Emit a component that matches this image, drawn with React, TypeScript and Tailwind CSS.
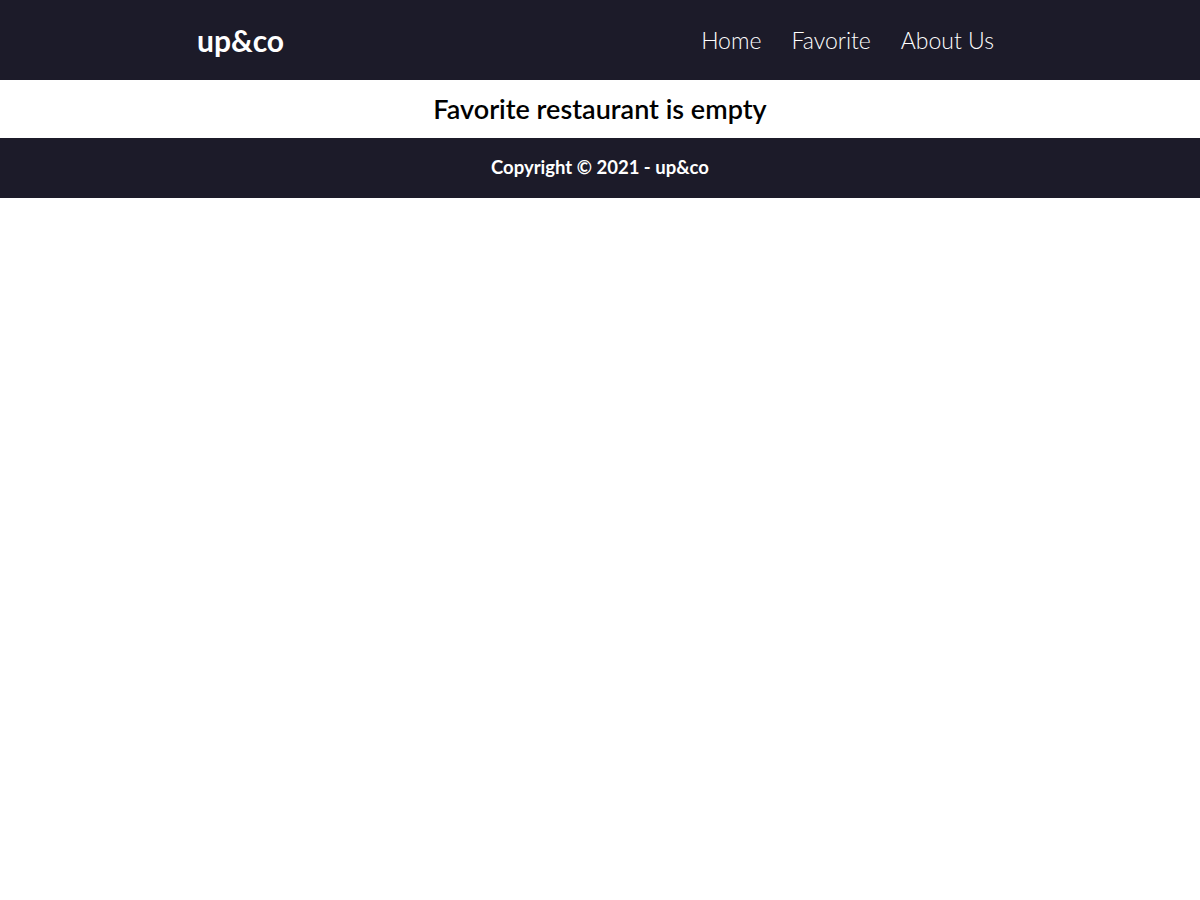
import React from 'react';

const navLinks = ['Home', 'Favorite', 'About Us'];

function App() {
  return (
    <div className="min-h-screen bg-white font-['Lato','Noto_Sans',sans-serif]">
      <header className="h-20 bg-[#1c1b29]">
        <div className="mx-auto flex h-full w-[800px] items-center justify-between">
          <a href="#" className="-ml-[3px] text-[30px] font-bold text-white">
            up&amp;co
          </a>
          <nav className="mr-[6px] flex gap-[30px]">
            {navLinks.map((link) => (
              <a key={link} href="#" className="text-[23px] font-light text-white">
                {link}
              </a>
            ))}
          </nav>
        </div>
      </header>

      <main className="flex h-[58px] items-center justify-center">
        <h2 className="text-[27px] font-semibold text-black">Favorite restaurant is empty</h2>
      </main>

      <footer className="flex h-[60px] items-center justify-center bg-[#1c1b29]">
        <p className="text-[18.5px] font-bold text-white">Copyright © 2021 - up&amp;co</p>
      </footer>
    </div>
  );
}

export default App;
